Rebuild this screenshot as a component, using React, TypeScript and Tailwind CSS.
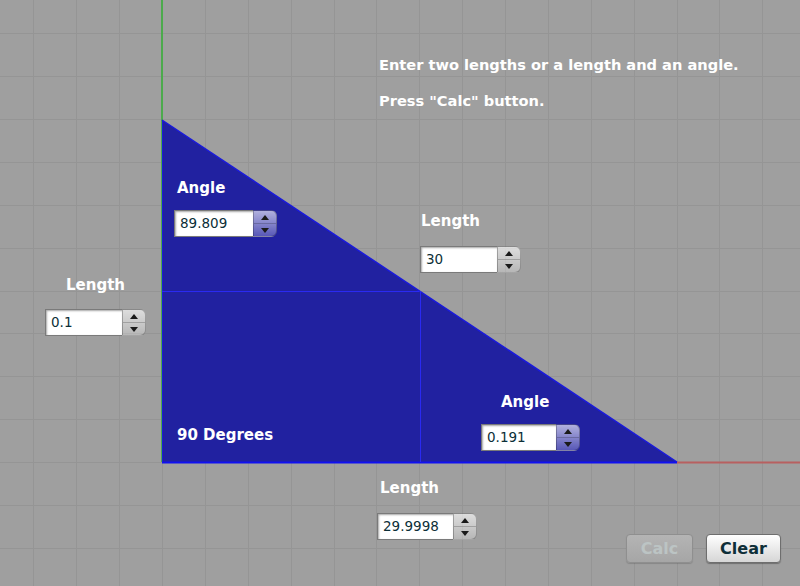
import React from "react";

const S = 42.875;
const OX = 162;
const OY = 462;

function Grid() {
  const xs: number[] = [];
  for (let k = -4; k <= 15; k++) xs.push(Math.round(OX + k * S) + 0.5);
  const ys: number[] = [];
  for (let k = -3; k <= 11; k++) ys.push(Math.round(OY - k * S) + 0.5);
  const mx = (OX + 677) / 2;
  const my = (120 + OY) / 2;
  return (
    <svg className="absolute inset-0" width={800} height={586}>
      {xs.map((x) => (
        <line key={"x" + x} x1={x} y1={0} x2={x} y2={586} stroke="#959595" strokeWidth={1} />
      ))}
      {ys.map((y) => (
        <line key={"y" + y} x1={0} y1={y} x2={800} y2={y} stroke="#959595" strokeWidth={1} />
      ))}
      <line x1={162} y1={0} x2={162} y2={462} stroke="#4caa4c" strokeWidth={2} />
      <line x1={677} y1={462.5} x2={800} y2={462.5} stroke="#b86060" strokeWidth={2} />
      <polygon points="162,120 677,462 162,462" fill="#2121a0" />
      <line x1={162} y1={120} x2={677} y2={462} stroke="#1a1adc" strokeWidth={1.5} />
      <line x1={162} y1={462.5} x2={677} y2={462.5} stroke="#1010f0" strokeWidth={2} />
      <line x1={162.5} y1={120} x2={162.5} y2={462} stroke="#1a1adc" strokeWidth={1} />
      <line x1={162} y1={Math.round(my) + 0.5} x2={mx} y2={Math.round(my) + 0.5} stroke="#2a2af2" strokeWidth={1} />
      <line x1={Math.round(mx) + 0.5} y1={my} x2={Math.round(mx) + 0.5} y2={462} stroke="#2a2af2" strokeWidth={1} />
    </svg>
  );
}

function Spinner({ value, width }: { value: string; width: number }) {
  return (
    <div className="flex h-[27px]">
      <div
        className="h-full bg-white border border-[#7a7a7a] border-r-0 shadow-[inset_1px_1px_2px_rgba(0,0,0,0.35)] flex items-center pl-[5px] text-[13.5px] text-[#0c2f38]"
        style={{ width, fontFamily: "'DejaVu Sans', Verdana, sans-serif" }}
      >
        {value}
      </div>
      <div className="w-[24px] h-full flex flex-col rounded-r-[6px] overflow-hidden border border-black/25 bg-gradient-to-b from-white/65 to-white/25">
        <div className="flex-1 flex items-center justify-center border-b border-black/20">
          <div className="w-0 h-0 border-l-[4px] border-r-[4px] border-b-[5px] border-l-transparent border-r-transparent border-b-[#1a1a1a]" />
        </div>
        <div className="flex-1 flex items-center justify-center">
          <div className="w-0 h-0 border-l-[4px] border-r-[4px] border-t-[5px] border-l-transparent border-r-transparent border-t-[#1a1a1a]" />
        </div>
      </div>
    </div>
  );
}

function Field({
  label,
  value,
  x,
  y,
  lx,
  ly,
  width,
}: {
  label: string;
  value: string;
  x: number;
  y: number;
  lx: number;
  ly: number;
  width: number;
}) {
  return (
    <>
      <div className="absolute text-white font-bold text-[15px] leading-none" style={{ left: lx, top: ly }}>
        {label}
      </div>
      <div className="absolute" style={{ left: x, top: y }}>
        <Spinner value={value} width={width} />
      </div>
    </>
  );
}

export default function App() {
  return (
    <div
      className="relative w-[800px] h-[586px] overflow-hidden bg-[#9f9f9f]"
      style={{ fontFamily: "'DejaVu Sans', Verdana, sans-serif" }}
    >
      <Grid />
      <div className="absolute left-[379px] top-[58px] text-white font-bold text-[14.6px] leading-none flex flex-col gap-[21px]">
        <div>Enter two lengths or a length and an angle.</div>
        <div>Press "Calc" button.</div>
      </div>

      <Field label="Angle" value="89.809" lx={177} ly={181} x={174} y={210} width={79} />
      <Field label="Length" value="30" lx={421} ly={214} x={420} y={246} width={77} />
      <Field label="Length" value="0.1" lx={66} ly={278} x={45} y={309} width={77} />
      <Field label="Angle" value="0.191" lx={501} ly={395} x={481} y={424} width={75} />
      <Field label="Length" value="29.9998" lx={380} ly={481} x={377} y={513} width={76} />

      <div className="absolute left-[177px] top-[428px] text-white font-bold text-[15px] leading-none">90 Degrees</div>

      <div className="absolute left-[626px] top-[534px] flex gap-[13px]">
        <button className="w-[67px] h-[29px] rounded-[4px] border border-[#8f8f8f] bg-gradient-to-b from-[#b4b4b4] to-[#a6a6a6] text-[#bcc4c4] font-bold text-[16px] shadow-[0_1px_1px_rgba(0,0,0,0.15)]">
          Calc
        </button>
        <button className="w-[75px] h-[29px] rounded-[4px] border border-[#6e6e6e] bg-gradient-to-b from-white to-[#d6d6d6] text-[#0e2f38] font-bold text-[16px] shadow-[0_1px_1px_rgba(0,0,0,0.3)]">
          Clear
        </button>
      </div>
    </div>
  );
}
